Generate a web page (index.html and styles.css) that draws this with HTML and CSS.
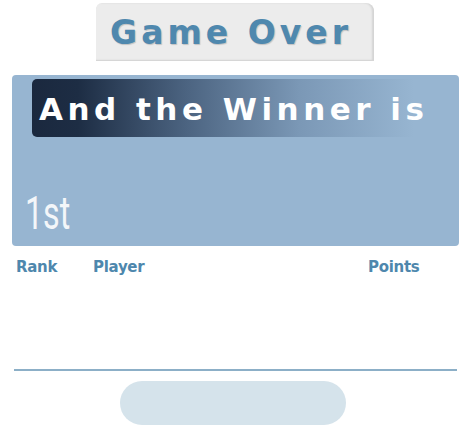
FILE: index.html
```html
<!DOCTYPE html>
<html>
<head>
<meta charset="utf-8">
<link rel="stylesheet" href="styles.css">
</head>
<body>
<div class="page">
  <div class="title-wrap">
    <div class="title">Game Over</div>
  </div>
  <div class="panel">
    <div class="banner"><span class="banner-text">And the Winner is</span></div>
    <div class="place">1st</div>
  </div>
  <div class="headers">
    <span class="h-rank">Rank</span>
    <span class="h-player">Player</span>
    <span class="h-points">Points</span>
  </div>
  <div class="rows"></div>
  <div class="rule"></div>
  <div class="btn-wrap"><div class="btn"></div></div>
</div>
</body>
</html>
```
FILE: styles.css
```css
html, body {
  margin: 0;
  padding: 0;
  background: #ffffff;
}
.page {
  width: 471px;
  height: 436px;
  display: flex;
  flex-direction: column;
  font-family: "DejaVu Sans", sans-serif;
}
.title-wrap {
  display: flex;
  justify-content: center;
  padding-top: 3px;
  padding-right: 1px;
}
.title {
  width: 278px;
  height: 57px;
  box-sizing: border-box;
  background: #ececec;
  border-radius: 6px 8px 0 0;
  box-shadow: inset -2px 0 2px rgba(0,0,0,0.10), 0 1px 0 #d6d6d6;
  display: flex;
  align-items: center;
  justify-content: center;
  color: #4f88ae;
  font-weight: bold;
  font-size: 33px;
  letter-spacing: 4px;
  text-shadow: 1px 1px 1px rgba(0,0,0,0.18);
  padding: 1px 8px 0 0;
}
.panel {
  margin: 15px 12px 0 12px;
  height: 171px;
  background: #97b5d1;
  border-radius: 4px;
  display: flex;
  flex-direction: column;
}
.banner {
  margin: 4px 0 0 20px;
  width: 382px;
  height: 58px;
  border-radius: 5px 0 0 5px;
  background: linear-gradient(to right, #1a283e 0%, #1d2d44 12%, #4b6380 40%, #7b98b6 70%, #97b5d1 100%);
  display: flex;
  align-items: center;
}
.banner-text {
  color: #ffffff;
  font-weight: bold;
  font-size: 31px;
  letter-spacing: 4.5px;
  padding-left: 7px;
  white-space: nowrap;
  padding-top: 1px;
}
.place {
  margin-top: auto;
  margin-left: 13px;
  margin-bottom: 9px;
  color: #f3f6f9;
  font-family: Roboto, sans-serif;
  font-weight: 400;
  font-size: 46px;
  line-height: 48px;
  transform: scaleX(0.7);
  transform-origin: left center;
}
.headers {
  display: flex;
  padding: 12px 0 0 16px;
  color: #4e87ad;
  font-weight: bold;
  font-size: 15px;
  line-height: 18px;
  letter-spacing: -0.3px;
}
.h-rank { width: 77px; }
.h-player { width: 275px; }
.rows {
  height: 93px;
}
.rule {
  margin: 0 14px 0 14px;
  height: 2px;
  background: #8cafc7;
}
.btn-wrap {
  display: flex;
  padding: 10px 0 0 120px;
}
.btn {
  width: 226px;
  height: 44px;
  border-radius: 22px;
  background: #d5e3eb;
}
```
